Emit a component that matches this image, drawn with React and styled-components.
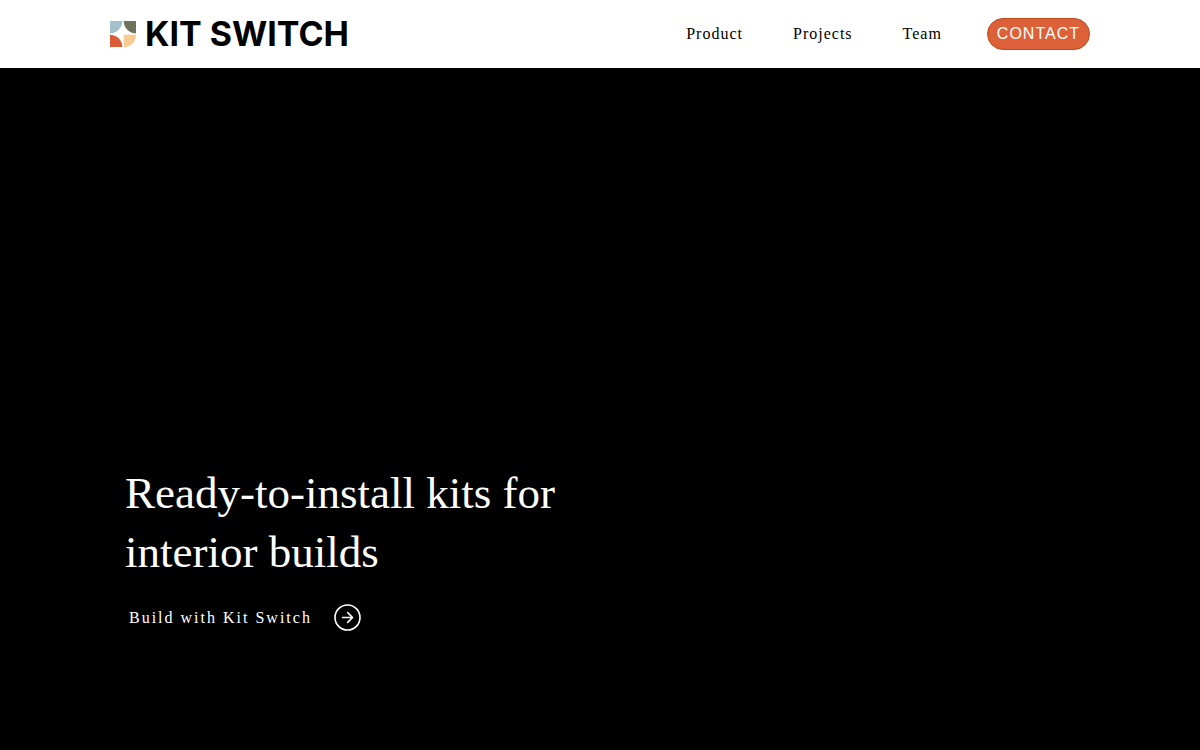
import React from "react";
import styled, { createGlobalStyle } from "styled-components";

const GlobalStyle = createGlobalStyle`
  * {
    box-sizing: border-box;
  }
  body {
    margin: 0;
    background: #000;
    font-family: "Liberation Serif", "Times New Roman", serif;
  }
`;

const Page = styled.div`
  min-height: 100vh;
  display: flex;
  flex-direction: column;
`;

const Header = styled.header`
  background: #fff;
  padding: 18px 20px;
`;

const Container = styled.div`
  width: 100%;
  max-width: 980px;
  margin: 0 auto;
`;

const HeaderRow = styled(Container)`
  display: flex;
  align-items: center;
  justify-content: space-between;
`;

const Brand = styled.a`
  display: flex;
  align-items: center;
  gap: 9px;
  color: #000;
  text-decoration: none;
  font-family: Inter, "Liberation Sans", sans-serif;
  font-size: 34px;
  font-weight: 700;
  line-height: 32px;
  white-space: nowrap;
`;

const Nav = styled.nav`
  display: flex;
  align-items: center;
  gap: 45px;
`;

const NavLinks = styled.div`
  display: flex;
  gap: 50px;
`;

const NavLink = styled.a`
  color: #000;
  font-size: 16px;
  line-height: 24px;
  letter-spacing: 1px;
  text-decoration: none;
`;

const ContactButton = styled.button`
  height: 32px;
  padding: 0 9px;
  border: 1px solid #c04b1c;
  border-radius: 16px;
  background: #dc6038;
  color: #fff;
  font-family: "Liberation Sans", Arial, sans-serif;
  font-size: 16px;
  line-height: 24px;
  letter-spacing: 1px;
  text-transform: uppercase;
  cursor: pointer;
`;

const Hero = styled.main`
  flex: 1;
  display: flex;
  align-items: flex-end;
  background: #000;
  color: #fff;
  padding: 48px 20px 119px;
`;

const HeroContent = styled(Container)`
  padding: 0 15px;
`;

const Title = styled.h1`
  max-width: 480px;
  margin: 0 0 22px;
  font-size: 45px;
  font-weight: 400;
  line-height: 59px;
`;

const BuildLink = styled.a`
  display: inline-flex;
  align-items: center;
  gap: 22px;
  padding-left: 4px;
  color: #fff;
  font-size: 16px;
  line-height: 27px;
  letter-spacing: 2px;
  text-decoration: none;
`;

const LogoMark = () => (
  <svg width="26" height="26" viewBox="0 0 26 26" aria-hidden="true">
    <path d="M0 0h12.3A12.3 12.3 0 0 1 0 12.3z" fill="#a3c0cb" />
    <path d="M13.7 0H26v12.3A12.3 12.3 0 0 1 13.7 0z" fill="#6f735c" />
    <path d="M0 13.7A12.3 12.3 0 0 1 12.3 26H0z" fill="#db5b36" />
    <path d="M13.7 13.7H26A12.3 12.3 0 0 1 13.7 26z" fill="#f8cc90" />
  </svg>
);

const ArrowCircle = () => (
  <svg
    width="27"
    height="27"
    viewBox="0 0 27 27"
    fill="none"
    stroke="currentColor"
    strokeWidth="1.6"
    strokeLinecap="round"
    strokeLinejoin="round"
    aria-hidden="true"
  >
    <circle cx="13.5" cy="13.5" r="12.5" />
    <path d="M8.5 13.5h10M13.7 8.6l4.9 4.9-4.9 4.9" />
  </svg>
);

const links = ["Product", "Projects", "Team"];

const App = () => {
  return (
    <React.Fragment>
      <GlobalStyle />
      <Page>
        <Header>
          <HeaderRow>
            <Brand href="#home">
              <LogoMark />
              KIT SWITCH
            </Brand>
            <Nav>
              <NavLinks>
                {links.map((link) => (
                  <NavLink key={link} href={`#${link.toLowerCase()}`}>
                    {link}
                  </NavLink>
                ))}
              </NavLinks>
              <ContactButton type="button">Contact</ContactButton>
            </Nav>
          </HeaderRow>
        </Header>
        <Hero>
          <HeroContent>
            <Title>Ready-to-install kits for interior builds</Title>
            <BuildLink href="#build">
              Build with Kit Switch
              <ArrowCircle />
            </BuildLink>
          </HeroContent>
        </Hero>
      </Page>
    </React.Fragment>
  );
};

export default App;
